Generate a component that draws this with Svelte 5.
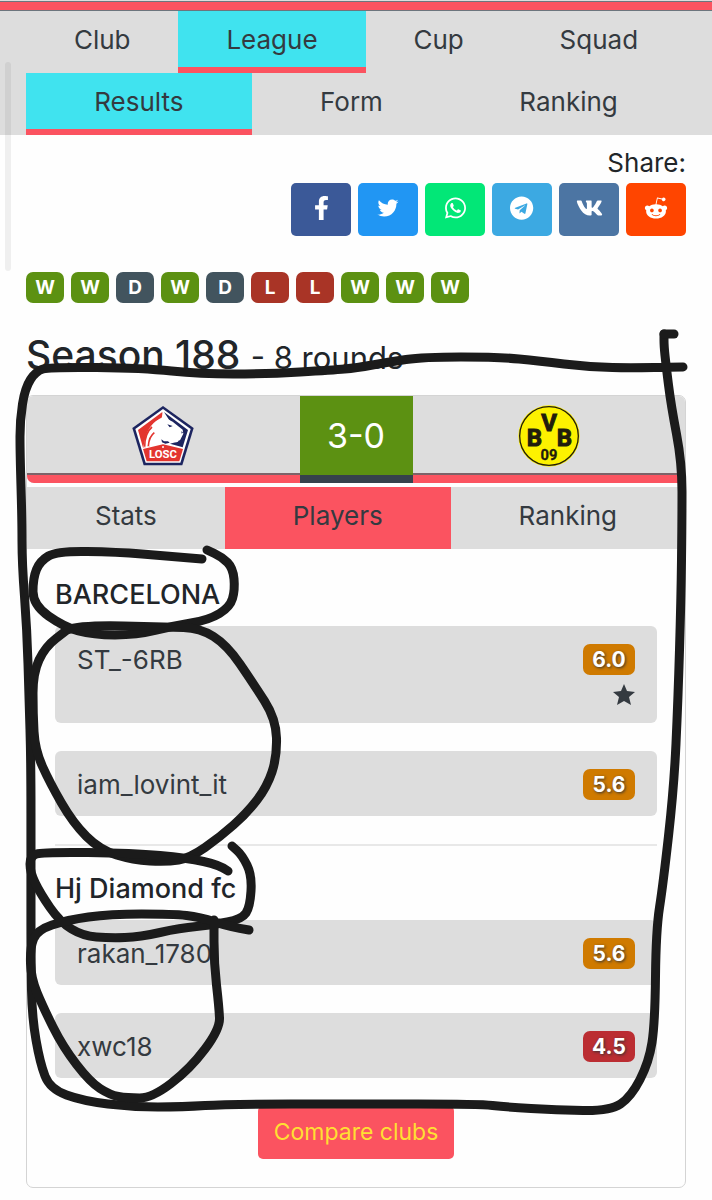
<script>

    let mainTabs = ["Club", "League", "Cup", "Squad"];
    let subTabs = ["Results", "Form", "Ranking"];
    let matchTabs = ["Stats", "Players", "Ranking"];

    let activeMain = "League";
    let activeSub = "Results";
    let activeMatch = "Players";

    let form = ["W", "W", "D", "W", "D", "L", "L", "W", "W", "W"];

    let teams = [
        {
            name: "BARCELONA",
            players: [
                { name: "ST_-6RB", rating: "6.0", best: true },
                { name: "iam_lovint_it", rating: "5.6" }
            ]
        },
        {
            name: "Hj Diamond fc",
            players: [
                { name: "rakan_1780", rating: "5.6" },
                { name: "xwc18", rating: "4.5" }
            ]
        }
    ];

    let networks = [
        {
            id: "facebook",
            box: "0 0 320 512",
            path: "M279.14 288l14.22-92.66h-88.91v-60.13c0-25.35 12.42-50.06 52.24-50.06h40.42V6.26S260.43 0 225.36 0c-73.22 0-121.08 44.38-121.08 124.72v70.62H22.89V288h81.39v224h100.17V288z"
        },
        {
            id: "twitter",
            box: "-36 -36 584 584",
            path: "M459.37 151.716c.325 4.548.325 9.097.325 13.645 0 138.72-105.583 298.558-298.558 298.558-59.452 0-114.68-17.219-161.137-47.106 8.447.974 16.568 1.299 25.34 1.299 49.055 0 94.213-16.568 130.274-44.832-46.132-.975-84.792-31.188-98.112-72.772 6.498.974 12.995 1.624 19.818 1.624 9.421 0 18.843-1.3 27.614-3.573-48.081-9.747-84.143-51.98-84.143-102.985v-1.299c13.969 7.797 30.214 12.67 47.431 13.319-28.264-18.843-46.781-51.005-46.781-87.391 0-19.492 5.197-37.36 14.294-52.954 51.655 63.675 129.3 105.258 216.365 109.807-1.624-7.797-2.599-15.918-2.599-24.04 0-57.828 46.782-104.934 104.934-104.934 30.213 0 57.502 12.67 76.67 33.137 23.715-4.548 46.456-13.32 66.599-25.34-7.798 24.366-24.366 44.833-46.132 57.827 21.117-2.273 41.584-8.122 60.426-16.243-14.292 20.791-32.161 39.308-52.628 54.253z"
        },
        {
            id: "whatsapp",
            box: "0 0 448 512",
            path: "M380.9 97.1C339 55.1 283.2 32 223.9 32c-122.4 0-222 99.6-222 222 0 39.1 10.2 77.3 29.6 111L0 480l117.7-30.9c32.4 17.7 68.9 27 106.1 27h.1c122.3 0 224.1-99.6 224.1-222 0-59.3-25.2-115-67.1-157zm-157 341.6c-33.2 0-65.7-8.9-94-25.7l-6.7-4-69.8 18.3L72 359.2l-4.4-7c-18.5-29.4-28.2-63.3-28.2-98.2 0-101.7 82.8-184.5 184.6-184.5 49.3 0 95.6 19.2 130.4 54.1 34.8 34.9 56.2 81.2 56.1 130.5 0 101.8-84.9 184.6-186.6 184.6zm101.2-138.2c-5.5-2.8-32.8-16.2-37.9-18-5.1-1.9-8.8-2.8-12.5 2.8-3.7 5.6-14.3 18-17.6 21.8-3.2 3.7-6.5 4.2-12 1.4-32.6-16.3-54-29.1-75.5-66-5.7-9.8 5.7-9.1 16.3-30.3 1.8-3.7.9-6.9-.5-9.7-1.4-2.8-12.5-30.1-17.1-41.2-4.5-10.8-9.1-9.3-12.5-9.5-3.2-.2-6.9-.2-10.6-.2-3.7 0-9.7 1.4-14.8 6.9-5.1 5.6-19.4 19-19.4 46.3 0 27.3 19.9 53.7 22.6 57.4 2.8 3.7 39.1 59.7 94.8 83.8 35.2 15.2 49 16.5 66.6 13.9 10.7-1.6 32.8-13.4 37.4-26.4 4.6-13 4.6-24.1 3.2-26.4-1.3-2.5-5-3.9-10.5-6.6z"
        },
        {
            id: "telegram",
            box: "0 0 496 512",
            path: "M248 8C111 8 0 119 0 256s111 248 248 248 248-111 248-248S385 8 248 8zm121.8 169.9l-40.7 191.8c-3 13.6-11.1 16.9-22.4 10.5l-62-45.7-29.9 28.8c-3.3 3.3-6.1 6.1-12.5 6.1l4.4-63.1 114.9-103.8c5-4.4-1.1-6.9-7.7-2.5l-142 89.4-61.2-19.1c-13.3-4.2-13.6-13.3 2.8-19.7l239.1-92.2c11.1-4 20.8 2.7 17.2 19.5z"
        },
        {
            id: "vk",
            box: "0 0 576 512",
            path: "M545 117.7c3.7-12.5 0-21.7-17.8-21.7h-58.9c-15 0-21.9 7.9-25.6 16.7 0 0-30 73.1-72.4 120.5-13.7 13.7-20 18.1-27.5 18.1-3.7 0-9.4-4.4-9.4-16.9V117.7c0-15-4.2-21.7-16.6-21.7h-92.6c-9.4 0-15 7-15 13.5 0 14.2 21.2 17.5 23.4 57.5v86.8c0 19-3.4 22.5-10.9 22.5-20 0-68.6-73.4-97.4-157.4-5.8-16.3-11.5-22.9-26.6-22.9H38.8c-16.8 0-20.2 7.9-20.2 16.7 0 15.6 20 93.1 93.1 195.5C160.4 378.1 229 416 291.4 416c37.5 0 42.1-8.4 42.1-22.9 0-66.8-3.4-73.1 15.4-73.1 8.7 0 23.7 4.4 58.7 38.1 40 40 46.6 57.9 69 57.9h58.9c16.8 0 25.3-8.4 20.4-25-11.2-34.9-86.9-106.7-90.3-111.5-8.7-11.2-6.2-16.2 0-26.2.1-.1 72-101.3 79.4-135.6z"
        },
        {
            id: "reddit",
            box: "0 0 512 512",
            path: "M440.3 203.5c-15 0-28.2 6.2-37.9 15.9-35.7-24.7-83.8-40.6-137.1-42.3L293 52.3l88.2 19.8c0 21.6 17.6 39.2 39.2 39.2 22 0 39.7-18.1 39.7-39.7s-17.6-39.7-39.7-39.7c-15.4 0-28.7 9.3-35.3 22l-97.4-21.6c-4.9-1.3-9.7 2.2-11 7.1L246.3 177c-52.9 2.2-100.5 18.1-136.3 42.8-9.7-10.1-23.4-16.3-38.4-16.3-55.6 0-73.8 74.6-22.9 100.1-1.8 7.9-2.6 16.3-2.6 24.7 0 83.8 94.4 151.7 210.3 151.7 116.4 0 210.8-67.9 210.8-151.7 0-8.4-.9-17.2-3.1-25.1 49.9-25.6 31.5-99.7-23.8-99.7zM129.4 308.9c0-22 17.6-39.7 39.7-39.7 21.6 0 39.2 17.6 39.2 39.7 0 21.6-17.6 39.2-39.2 39.2-22 .1-39.7-17.6-39.7-39.2zm214.3 93.5c-36.4 36.4-139.1 36.4-175.5 0-4-3.5-4-9.7 0-13.7 3.5-3.5 9.7-3.5 13.2 0 27.8 28.5 120 29 149 0 3.5-3.5 9.7-3.5 13.2 0 4.1 4 4.1 10.2.1 13.7zm-.8-54.2c-21.6 0-39.2-17.6-39.2-39.2 0-22 17.6-39.7 39.2-39.7 22 0 39.7 17.6 39.7 39.7-.1 21.5-17.7 39.2-39.7 39.2z"
        }
    ];

    // Pen marks drawn over the page, one list of x,y points per stroke
    let strokes = [
        [683,367, 636,368, 589,367, 539,361, 499,357, 423,357, 389,362, 356,368, 333,370, 267,374, 200,374, 143,368, 50,367, 36,371, 25,388, 20,420, 20,453, 22,520, 22,563, 27,630, 29,697, 31,763, 31,863, 31,963, 32,1017, 40,1063, 50,1089, 83,1101, 133,1107, 183,1107, 227,1104, 356,1104, 479,1104, 506,1107, 556,1110, 610,1111, 631,1097, 649,1062, 655,1023, 656,930, 663,885, 674,787, 678,700, 681,600, 682,520, 682,463, 671,405, 666,365, 664,346, 664,334],
        [664,334, 674,334],
        [202,559, 167,556, 117,552, 57,551, 40,561, 33,578, 33,605, 64,627, 93,635, 137,635, 173,626, 209,620, 230,607, 235,590, 233,568, 222,557, 207,550],
        [67,630, 80,625, 167,627, 200,628, 227,645, 253,683, 276,719, 277,757, 267,787, 247,813, 220,837, 190,858, 167,862, 133,860, 100,850, 73,823, 50,783, 35,750, 33,713, 33,673, 45,647, 67,630],
        [228,871, 220,865, 187,858, 133,853, 43,852, 30,856, 30,872, 40,893, 60,922, 83,936, 110,938, 140,937, 180,928, 213,925, 242,919, 250,907, 252,875, 242,855, 232,846],
        [249,930, 230,927, 200,917, 173,914, 110,914, 67,920, 37,930, 30,948, 31,978, 43,1007, 63,1047, 90,1082, 110,1095, 127,1098, 152,1098, 190,1069, 220,1029, 219,1007, 214,963, 214,920]
    ];

    // Curve through the midpoints, so the corners come out round
    function smooth(p) {
        let d = `M${p[0]} ${p[1]}`;
        for (let i = 2; i < p.length - 2; i += 2) {
            d += `Q${p[i]} ${p[i + 1]} ${(p[i] + p[i + 2]) / 2} ${(p[i + 1] + p[i + 3]) / 2}`;
        }
        return d + `L${p[p.length - 2]} ${p[p.length - 1]}`;
    }

</script>

<div class="page">
    <header>
        <nav class="tabs">
            {#each mainTabs as tab}
            <button class={tab === activeMain ? 'tab active' : 'tab'} on:click={() => { activeMain = tab }}>{tab}</button>
            {/each}
        </nav>
        <nav class="tabs">
            {#each subTabs as tab}
            <button class={tab === activeSub ? 'tab active' : 'tab'} on:click={() => { activeSub = tab }}>{tab}</button>
            {/each}
        </nav>
    </header>

    <main>
        <div class="share">
            <span>Share:</span>
            <div class="networks">
                {#each networks as network}
                <a class="network {network.id}" href="#{network.id}" aria-label={network.id}>
                    <svg viewBox={network.box} height="24" aria-hidden="true"><path d={network.path} /></svg>
                </a>
                {/each}
            </div>
        </div>

        <div class="form">
            {#each form as result}
            <span class="badge {result}">{result}</span>
            {/each}
        </div>

        <h2>Season 188 <small>- 8 rounds</small></h2>

        <section class="card">
            <div class="match">
                <div class="side">
                    <svg class="crest" viewBox="38 22 186 186" role="img" aria-label="LOSC">
                        <path fill="#1d2560" d="M131 25L223 91L189 203H73L39 91Z" />
                        <path fill="#fff" d="M131 34L214 94L183 195H79L48 94Z" />
                        <path fill="#e3352f" d="M129 43L129 60C105 66 92 96 92 146L71 150L56 97Z" />
                        <path fill="#1d2560" d="M134 43L206 97L190 149L152 138C164 134 170 134 176 132L190 102L163 78L148 65Z" />
                        <path fill="#fff" d="M131 48L141 63L160 72L190 96L192 108L182 128L160 131L150 128L140 141L131 137L72 150C78 112 88 86 110 70L126 62Z" />
                        <path fill="none" stroke="#e3352f" stroke-width="5" d="M98 88C80 103 76 125 76 147M105 105C93 114 88 130 87 145" />
                        <path fill="#1d2560" d="M144 80L160 85L151 89ZM126 125L134 131L146 131L151 135L138 138L128 134ZM186 101L191 104L187 108Z" />
                        <path fill="#e3352f" d="M71 154L131 140L191 154L180 191H82Z" />
                        <circle cx="131" cy="148" r="3" fill="#fff" />
                        <text x="131" y="182" font-size="34" fill="#fff">LOSC</text>
                    </svg>
                </div>
                <div class="score">3-0</div>
                <div class="side">
                    <svg class="crest" viewBox="40 20 186 186" role="img" aria-label="BVB 09">
                        <circle cx="133" cy="113" r="92" fill="#fdf200" />
                        <circle cx="133" cy="113" r="88" fill="none" stroke="#221c0c" stroke-width="4" />
                        <g fill="#221c0c" stroke="#221c0c" stroke-width="3">
                            <text x="89" y="142" font-size="72">B</text>
                            <text x="133" y="98" font-size="72">V</text>
                            <text x="179" y="142" font-size="72">B</text>
                            <text x="133" y="185" font-size="44" stroke-width="1">09</text>
                        </g>
                    </svg>
                </div>
            </div>

            <nav class="tabs inner">
                {#each matchTabs as tab}
                <button class={tab === activeMatch ? 'tab chosen' : 'tab'} on:click={() => { activeMatch = tab }}>{tab}</button>
                {/each}
            </nav>

            <div class="teams">
                {#each teams as team, i}
                {#if i > 0}<hr>{/if}
                <h3>{team.name}</h3>
                <ul>
                    {#each team.players as player}
                    <li>
                        <span>{player.name}</span>
                        <div class="marks">
                            <span class={player.rating < 5 ? 'rating low' : 'rating'}>{player.rating}</span>
                            {#if player.best}
                            <svg class="star" viewBox="0 0 22 22" role="img" aria-label="Best player"><path d="M11 0L14 7L22 8L16 13L18 21L11 17L4 21L6 13L0 8L8 7Z" /></svg>
                            {/if}
                        </div>
                    </li>
                    {/each}
                </ul>
                {/each}
                <button class="compare">Compare clubs</button>
            </div>
        </section>
    </main>

    <div class="scrollbar"></div>
    <svg class="pen" viewBox="0 0 712 1200" aria-hidden="true">
        {#each strokes as stroke}
        <path d={smooth(stroke)} />
        {/each}
    </svg>
</div>

<style>

    :global(body) {
        margin: 0;
        background: #fefefe;
    }

    .page {
        position: relative;
        font-family: Inter, "Liberation Sans", sans-serif;
        font-size: 26px;
        line-height: 40px;
        color: #212529;
        overflow: hidden;
    }

    header {
        background: #ddd;
        border-top: 1px solid #ddd;
        padding: 0 26px;
    }

    header::before {
        content: "";
        display: block;
        height: 7px;
        margin: 0 -26px;
        background: #fb5360;
        border: solid #6c757d;
        border-width: 1px 0;
        padding-top: 1px;
    }

    .tabs {
        display: flex;
    }

    .tab {
        flex: 1 1 auto;
        font: inherit;
        color: #343a40;
        background: none;
        border: none;
        border-bottom: 6px solid transparent;
        padding: 9px 14px 7px;
        cursor: pointer;
    }

    .tab.active {
        background: #40e3ef;
        border-color: #fb5360;
    }

    .tab.chosen {
        background: #fb5360;
    }

    main {
        padding: 8px 26px 13px;
    }

    .share {
        display: flex;
        flex-direction: column;
        align-items: flex-end;
    }

    .networks {
        display: flex;
        gap: 7px;
    }

    .network {
        display: flex;
        align-items: center;
        justify-content: center;
        box-sizing: border-box;
        width: 60px;
        height: 53px;
        padding-bottom: 3px;
        border-radius: 5px;
    }

    .network svg {
        fill: #fff;
    }

    .facebook { background: #3b5998; }
    .twitter { background: #2196f3; }
    .whatsapp { background: #02e777; }
    .telegram { background: #3ca9e2; }
    .vk { background: #4c75a3; }
    .reddit { background: #ff4500; }

    .form {
        display: flex;
        gap: 7px;
        margin-top: 36px;
    }

    .badge,
    .rating {
        box-sizing: border-box;
        height: 31px;
        border-radius: 7px;
        line-height: 31px;
        font-weight: 700;
        text-align: center;
        color: #fff;
    }

    .badge {
        width: 38px;
        font-size: 19px;
    }

    .W { background: #5c9112; }
    .D { background: #42545e; }
    .L { background: #a93426; }

    h2 {
        margin: 32px 0 20px;
        font-size: 39px;
        line-height: 40px;
        font-weight: 500;
    }

    h2 small {
        font-size: 31px;
        line-height: 31px;
        font-weight: 400;
    }

    .card {
        border: 1px solid #d4d4d4;
        border-radius: 7px;
        overflow: hidden;
    }

    .match {
        display: flex;
        background: #ddd;
        border-radius: 0 0 7px 7px;
        overflow: hidden;
    }

    .side {
        flex: 1;
        display: flex;
        align-items: center;
        justify-content: center;
        height: 79px;
        border-bottom: 8px solid #fb5360;
        box-shadow: inset 0 -2px #7c6268;
    }

    .crest {
        width: 62px;
        height: 62px;
        font-family: Roboto, sans-serif;
        font-weight: 700;
        text-anchor: middle;
    }

    .score {
        width: 113px;
        height: 79px;
        border-bottom: 8px solid #36424c;
        background: #5c9112;
        color: #fff;
        font-size: 34px;
        line-height: 79px;
        text-align: center;
    }

    .inner {
        margin-top: 4px;
        background: #ddd;
    }

    .teams {
        padding: 28px;
    }

    h3 {
        margin: 0;
        font-size: 27px;
        line-height: 36px;
        font-weight: 500;
    }

    ul {
        display: grid;
        gap: 28px;
        margin: 13px 0 28px;
        padding: 0;
        list-style: none;
    }

    li {
        display: flex;
        justify-content: space-between;
        padding: 14px 22px 11px;
        background: #ddd;
        border-radius: 6px;
        color: #343a40;
    }

    .marks {
        display: flex;
        flex-direction: column;
        align-items: flex-end;
        gap: 9px;
        padding: 4px 0 5px;
    }

    .rating {
        width: 52px;
        font-size: 21px;
        background: #cf7a00;
        text-shadow: 1px 1px 3px #333;
    }

    .rating.low {
        background: #bb2d32;
    }

    .star {
        width: 22px;
        height: 22px;
        margin-bottom: 1px;
        fill: #343a40;
    }

    hr {
        margin: 0 0 25px;
        border: none;
        border-top: 2px solid #e8e8e8;
    }

    .compare {
        display: block;
        margin: 0 auto;
        padding: 6px 16px 7px;
        border: none;
        border-radius: 5px;
        background: #fb5360;
        color: #ffdf33;
        font: inherit;
        font-size: 23px;
        cursor: pointer;
    }

    .scrollbar {
        position: absolute;
        top: 62px;
        left: 5px;
        width: 6px;
        height: 209px;
        border-radius: 3px;
        background: rgba(0, 0, 0, 0.06);
    }

    .pen {
        position: absolute;
        top: 0;
        left: 0;
        width: 100%;
        fill: none;
        stroke: #1b1b1b;
        stroke-width: 9;
        stroke-linecap: round;
        stroke-linejoin: round;
        pointer-events: none;
    }

</style>
